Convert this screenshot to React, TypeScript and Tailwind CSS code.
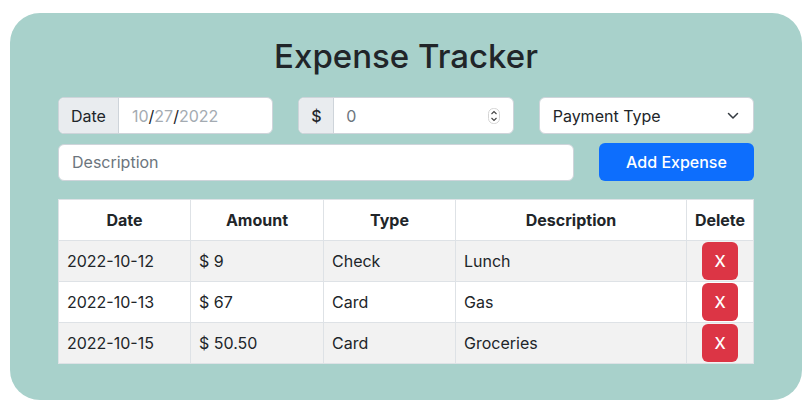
const expenses = [
  { date: '2022-10-12', amount: '9', type: 'Check', description: 'Lunch' },
  { date: '2022-10-13', amount: '67', type: 'Card', description: 'Gas' },
  { date: '2022-10-15', amount: '50.50', type: 'Card', description: 'Groceries' },
];

function Spinner() {
  return (
    <svg width="12" height="16" viewBox="0 0 12 16" fill="none">
      <rect x="0.5" y="0.5" width="11" height="15" rx="5" fill="#fff" stroke="#d4d4d4" />
      <path d="M3.5 6 L6 3.5 L8.5 6" stroke="#444" strokeWidth="1.1" />
      <path d="M3.5 10 L6 12.5 L8.5 10" stroke="#444" strokeWidth="1.1" />
    </svg>
  );
}

function Chevron() {
  return (
    <svg width="12" height="8" viewBox="0 0 12 8" fill="none">
      <path d="M1.5 1.5 L6 6 L10.5 1.5" stroke="#343a40" strokeWidth="1.5" strokeLinecap="round" strokeLinejoin="round" />
    </svg>
  );
}

export default function App() {
  return (
    <div className="bg-white min-h-[413px] pt-[13px] font-['Inter',sans-serif] text-[#212529]">
      <div className="ml-[10px] w-[792px] h-[387px] rounded-[30px] bg-[#a8d1cb] px-[48px] pt-[24px]">
        <h1 className="text-center text-[33px] leading-[38px] font-medium mb-[22px]">Expense Tracker</h1>

        <div className="grid grid-cols-3 gap-[25px]">
          <div className="flex h-[37px] rounded-[6px] border border-[#ced4da] bg-white overflow-hidden text-base">
            <span className="flex items-center px-[12px] bg-[#e9ecef] border-r border-[#ced4da]">Date</span>
            <span className="flex items-center pl-[13px] text-[#a4abb2]">
              10<span className="text-[#212529]">/</span>27<span className="text-[#212529]">/</span>2022
            </span>
          </div>
          <div className="flex h-[37px] rounded-[6px] border border-[#ced4da] bg-white overflow-hidden text-base">
            <span className="flex items-center w-[35px] justify-center bg-[#e9ecef] border-r border-[#ced4da] font-medium">$</span>
            <span className="flex-1 flex items-center justify-between pl-[12px] pr-[13px] text-[#6c757d]">
              0
              <Spinner />
            </span>
          </div>
          <div className="flex h-[37px] items-center justify-between rounded-[6px] border border-[#ced4da] bg-white pl-[13px] pr-[14px] text-base">
            <span>Payment Type</span>
            <Chevron />
          </div>
        </div>

        <div className="flex gap-[25px] mt-[9px] items-center">
          <div className="flex-1 flex items-center h-[37px] rounded-[6px] border border-[#ced4da] bg-white pl-[13px] text-base text-[#6c757d]">
            Description
          </div>
          <button className="w-[155px] h-[38px] rounded-[6px] bg-[#0d6efd] text-white text-base font-medium">Add Expense</button>
        </div>

        <table className="mt-[18px] w-full table-fixed border-collapse border border-[#dee2e6] text-base">
          <colgroup>
            <col className="w-[132px]" />
            <col className="w-[133px]" />
            <col className="w-[132px]" />
            <col className="w-[231px]" />
            <col className="w-[67px]" />
          </colgroup>
          <thead>
            <tr className="bg-white h-[41px]">
              {['Date', 'Amount', 'Type', 'Description', 'Delete'].map((h) => (
                <th key={h} className="border border-[#dee2e6] font-bold text-center px-0">
                  {h}
                </th>
              ))}
            </tr>
          </thead>
          <tbody>
            {expenses.map((e, i) => (
              <tr key={e.date} className={`h-[41px] ${i % 2 === 0 ? 'bg-[#f2f2f2]' : 'bg-white'}`}>
                <td className="border border-[#dee2e6] px-[8px]">{e.date}</td>
                <td className="border border-[#dee2e6] px-[8px]">$ {e.amount}</td>
                <td className="border border-[#dee2e6] px-[8px]">{e.type}</td>
                <td className="border border-[#dee2e6] px-[8px]">{e.description}</td>
                <td className="border border-[#dee2e6] p-0">
                  <div className="flex justify-center">
                    <button className="w-[36px] h-[38px] rounded-[6px] bg-[#dc3545] text-white font-medium">X</button>
                  </div>
                </td>
              </tr>
            ))}
          </tbody>
        </table>
      </div>
    </div>
  );
}
